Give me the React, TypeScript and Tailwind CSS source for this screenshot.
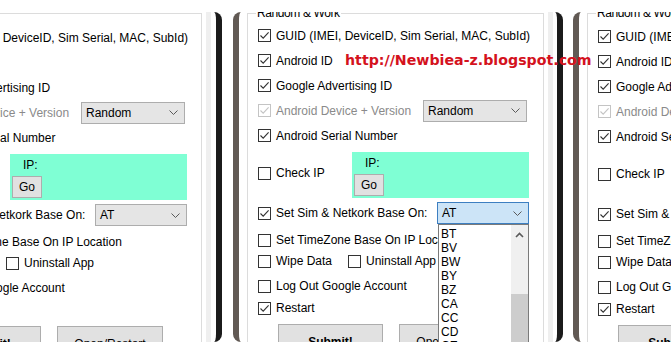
import React from "react";

const Chevron = () => (
  <svg width="9" height="5" viewBox="0 0 9 5" className="shrink-0">
    <path d="M0.5 0.5 L4.5 4.5 L8.5 0.5" stroke="#5a5a5a" strokeWidth="1" fill="none" />
  </svg>
);

const Box = ({ checked, disabled }: { checked?: boolean; disabled?: boolean }) => (
  <span
    className={`flex h-[13px] w-[13px] shrink-0 items-center justify-center border bg-white ${
      disabled ? "border-[#c4c4c4]" : "border-[#333]"
    }`}
  >
    {checked && (
      <svg width="11" height="11" viewBox="0 0 11 11">
        <path
          d="M1.5 5.5 L4.2 8.2 L9.6 2.3"
          stroke={disabled ? "#c4c4c4" : "#333"}
          strokeWidth="1.1"
          fill="none"
        />
      </svg>
    )}
  </span>
);

const Check = ({
  label,
  checked,
  disabled,
  className = "",
}: {
  label: string;
  checked?: boolean;
  disabled?: boolean;
  className?: string;
}) => (
  <div className={`flex shrink-0 items-center gap-[5px] whitespace-nowrap ${className}`}>
    <Box checked={checked} disabled={disabled} />
    <span className={disabled ? "text-[#8a8a8a]" : "text-black"}>{label}</span>
  </div>
);

const countries = ["BT", "BV", "BW", "BY", "BZ", "CA", "CC", "CD", "CE", "CF"];

function Form({ offset, pad, open }: { offset: string; pad: string; open?: boolean }) {
  return (
    <div className={`flex shrink-0 ${offset}`}>
      <fieldset
        className={`-mt-[6px] h-[400px] w-[297px] shrink-0 border border-[#dcdcdc] pl-[10px] ${pad}`}
      >
        <legend className="-ml-[2px] px-[1px] text-[12px] leading-[14px] tracking-[-0.4px]">
          Random &amp; Work
        </legend>

        <div className="flex h-[25px] items-center">
          <Check label="GUID (IMEI, DeviceID, Sim Serial, MAC, SubId)" checked />
        </div>
        <div className="flex h-[25px] items-center">
          <Check label="Android ID" checked />
        </div>
        <div className="flex h-[25px] items-center">
          <Check label="Google Advertising ID" checked />
        </div>
        <div className="flex h-[25px] items-center">
          <Check label="Android Device + Version" checked disabled className="w-[165px]" />
          <div className="flex h-[22px] w-[104px] items-center justify-between border border-[#adadad] bg-[#e5e5e5] pl-[4px] pr-[6px]">
            <span>Random</span>
            <Chevron />
          </div>
        </div>
        <div className="flex h-[25px] items-center">
          <Check label="Android Serial Number" checked />
        </div>

        <div className="mt-[4px] flex h-[46px] items-center">
          <Check label="Check IP" className="mb-[4px] w-[94px]" />
          <div className="flex h-[46px] w-[177px] flex-col bg-[#7fffd4] pt-[4px]">
            <span className="ml-[13px] leading-[14px]">IP:</span>
            <div className="ml-[2px] mt-[4px] flex h-[22px] w-[30px] items-center justify-center border border-[#adadad] bg-[#e1e1e1]">
              Go
            </div>
          </div>
        </div>

        <div className="mt-[4px] flex h-[22px] items-center">
          <Check label="Set Sim & Netkork Base On:" checked className="w-[179px]" />
          <div className="relative">
            <div
              className={`flex h-[22px] w-[92px] items-center justify-between border pl-[4px] pr-[6px] ${
                open ? "border-[#3d7fc1] bg-[#cce4f7]" : "border-[#adadad] bg-[#e5e5e5]"
              }`}
            >
              <span>AT</span>
              <Chevron />
            </div>
            {open && (
              <div className="absolute left-[1px] top-full z-10 flex h-[130px] w-[91px] border border-[#7a7a7a] bg-white">
                <div className="flex-1 pl-[2px] pt-[2px]">
                  {countries.map((c) => (
                    <div key={c} className="h-[14px] text-[12px] leading-[14px]">
                      {c}
                    </div>
                  ))}
                </div>
                <div className="flex w-[17px] flex-col bg-[#f0f0f0]">
                  <div className="flex h-[17px] items-center justify-center pt-[2px]">
                    <svg width="9" height="6" viewBox="0 0 9 6">
                      <path d="M1 5 L4.5 1.5 L8 5" stroke="#5a5a5a" strokeWidth="1.6" fill="none" />
                    </svg>
                  </div>
                  <div className="mt-[52px] flex-1 bg-[#cdcdcd]" />
                </div>
              </div>
            )}
          </div>
        </div>

        <div className="mt-[6px] flex h-[20px] items-center">
          <Check label="Set TimeZone Base On IP Location" />
        </div>
        <div className="mt-[1px] flex h-[20px] items-center">
          <Check label="Wipe Data" className="w-[90px]" />
          <Check label="Uninstall App" />
        </div>
        <div className="mt-[5px] flex h-[20px] items-center">
          <Check label="Log Out Google Account" />
        </div>
        <div className="mt-[2px] flex h-[20px] items-center">
          <Check label="Restart" checked />
        </div>

        <div className="mt-[6px] flex h-[30px] gap-[16px] pl-[20px]">
          <div className="flex h-[30px] w-[105px] items-center justify-center border border-[#adadad] bg-[#e1e1e1] pt-[6px] font-bold">
            Submit!
          </div>
          <div className="flex h-[30px] w-[106px] items-center justify-center border border-[#adadad] bg-[#e1e1e1] pt-[6px]">
            Open/Restart
          </div>
        </div>
      </fieldset>
      <div className="ml-[4px] h-[330px] w-[5px] shrink-0 bg-[#efefef]" />
    </div>
  );
}

export default function App() {
  return (
    <div className="relative h-[352px] w-[671px] overflow-hidden bg-white font-['Liberation_Sans',Arial,sans-serif] text-[12px] text-black">
      <div className="mt-[12px] flex h-[330px]">
        <div className="flex h-[330px] w-[222px] shrink-0 overflow-hidden rounded-r-[8px] border-r-[6px] border-[#1b1b1b] bg-white">
          <Form offset="-ml-[95px]" pad="pt-[5px]" />
        </div>
        <div className="ml-[11px] flex h-[330px] w-[330px] shrink-0 overflow-hidden rounded-[8px] border-l-[6px] border-r-[6px] border-l-[#615954] border-r-[#1b1b1b] bg-white">
          <Form offset="ml-[8px]" pad="pt-[3px]" open />
        </div>
        <div className="ml-[10px] flex h-[330px] w-[330px] shrink-0 overflow-hidden rounded-[8px] border-l-[6px] border-r-[6px] border-l-[#615954] border-r-[#1b1b1b] bg-white">
          <Form offset="ml-[8px]" pad="pt-[4px]" />
        </div>
      </div>

      <div className="absolute left-[345px] top-[51px] font-['DejaVu_Sans',Verdana,sans-serif] text-[14.2px] font-bold leading-[18px] text-[#d4121d]">
        http://Newbiea-z.blogspot.com
      </div>
    </div>
  );
}
